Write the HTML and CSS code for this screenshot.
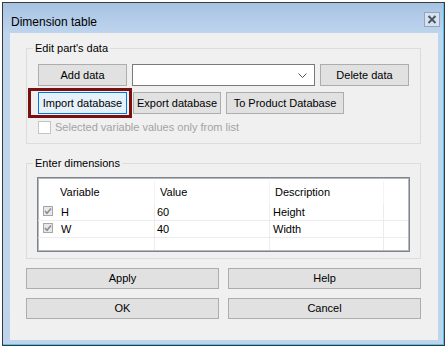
FILE: index.html
```html
<!DOCTYPE html>
<html>
<head>
<meta charset="utf-8">
<link rel="stylesheet" href="styles.css">
</head>
<body>
<div class="window">
  <div class="titlebar">
    <span class="title">Dimension table</span>
    <span class="close">
      <svg width="14" height="13" viewBox="0 0 14 13"><path d="M3.5 3 L10.5 10 M10.5 3 L3.5 10" stroke="#4d5561" stroke-width="2" fill="none"/></svg>
    </span>
  </div>
  <div class="client">
    <div class="group g1">
      <span class="legend">Edit part's data</span>
      <div class="row r1">
        <div class="btn w89">Add data</div>
        <div class="combo">
          <svg class="chev" width="9" height="5" viewBox="0 0 9 5"><path d="M0.5 0.5 L4.5 4.5 L8.5 0.5" stroke="#555" stroke-width="1" fill="none"/></svg>
        </div>
        <div class="btn w89">Delete data</div>
      </div>
      <div class="row r2">
        <div class="btn w89 focus">Import database</div>
        <div class="btn w88">Export database</div>
        <div class="btn w118">To Product Database</div>
      </div>
      <div class="check disabled"><span class="box"></span><span>Selected variable values only from list</span></div>
      <div class="highlight"></div>
    </div>
    <div class="group g2">
      <span class="legend">Enter dimensions</span>
      <div class="table">
        <div class="tr head">
          <div class="td c1"><span class="pad"></span>Variable</div>
          <div class="td c2">Value</div>
          <div class="td c3">Description</div>
          <div class="td c4"></div>
        </div>
        <div class="tr">
          <div class="td c1"><span class="rcheck"><svg width="10" height="10" viewBox="0 0 10 10"><rect x="0.5" y="0.5" width="9" height="9" fill="#e8e8e8" stroke="#a6a6a6"/><path d="M2 5 L4 7.2 L8 2.6" stroke="#8c8c8c" stroke-width="1.6" fill="none"/></svg></span>H</div>
          <div class="td c2">60</div>
          <div class="td c3">Height</div>
          <div class="td c4"></div>
        </div>
        <div class="tr">
          <div class="td c1"><span class="rcheck"><svg width="10" height="10" viewBox="0 0 10 10"><rect x="0.5" y="0.5" width="9" height="9" fill="#e8e8e8" stroke="#a6a6a6"/><path d="M2 5 L4 7.2 L8 2.6" stroke="#8c8c8c" stroke-width="1.6" fill="none"/></svg></span>W</div>
          <div class="td c2">40</div>
          <div class="td c3">Width</div>
          <div class="td c4"></div>
        </div>
        <div class="tr last">
          <div class="td c1"></div>
          <div class="td c2"></div>
          <div class="td c3"></div>
          <div class="td c4"></div>
        </div>
      </div>
    </div>
    <div class="buttons">
      <div class="btn">Apply</div>
      <div class="btn">Help</div>
      <div class="btn">OK</div>
      <div class="btn">Cancel</div>
    </div>
  </div>
</div>
</body>
</html>
```

FILE: styles.css
```css
* { box-sizing: border-box; }
html, body { margin: 0; padding: 0; background: #ffffff; }
body {
  font-family: "Liberation Sans", Arial, sans-serif;
  font-size: 11px;
  color: #000;
}
.window {
  margin: 2px 0 0 2px;
  width: 443px;
  height: 344px;
  border: 1px solid #3a3a3a;
  background: linear-gradient(#a7c2e2, #bfd5ee 31px, #bdd4ec);
  box-shadow: inset -1px -1px 0 #4fc3f0;
  display: flex;
  flex-direction: column;
}
.titlebar {
  height: 30px;
  padding: 9px 4px 0 8px;
  display: flex;
  justify-content: space-between;
  align-items: flex-start;
}
.title {
  margin-top: 3px;
  font-size: 12px;
  line-height: 15px;
  color: #000;
}
.close {
  width: 16px;
  height: 15px;
  border: 1px solid #96a5b8;
  background: #d6e2f1;
  display: flex;
  align-items: center;
  justify-content: center;
}
.close svg { display: block; }
.client {
  margin: 0 6px 0 7px;
  height: 307px;
  background: #f0f0f0;
  padding: 15px 17px 0 16px;
}
.group {
  position: relative;
  border: 1px solid #dcdcdc;
}
.legend {
  position: absolute;
  top: -7px;
  left: 6px;
  padding: 0 2px;
  background: #f0f0f0;
  line-height: 13px;
}
.g1 { padding: 15px 10px 9px 11px; }
.row { display: flex; height: 22px; }
.r1 { gap: 5px; }
.r2 { margin-top: 6px; gap: 6px; }
.r2 .w118 { margin-left: -1px; }
.btn {
  height: 22px;
  background: #e1e1e1;
  border: 1px solid #adadad;
  display: flex;
  align-items: center;
  justify-content: center;
  white-space: nowrap;
  line-height: 13px;
}
.w89 { width: 89px; }
.w88 { width: 88px; }
.w118 { width: 118px; }
.btn.focus {
  border-color: #0078d7;
  background: #e5f1fb;
}
.combo {
  width: 183px;
  height: 22px;
  background: #fff;
  border: 1px solid #7a7a7a;
  display: flex;
  align-items: center;
  justify-content: flex-end;
  padding-right: 7px;
}
.chev { display: block; }
.check {
  margin-top: 7px;
  display: flex;
  align-items: center;
  gap: 4px;
  height: 13px;
  line-height: 13px;
}
.check .box {
  width: 13px;
  height: 13px;
  border: 1px solid #c4c4c4;
  background: #fff;
}
.check.disabled { color: #a3a3a3; }
.highlight {
  position: absolute;
  left: 1px;
  top: 39px;
  width: 104px;
  height: 30px;
  border: 3px solid #7a0f10;
}
.g2 {
  margin-top: 19px;
  padding: 13px 10px 6px 10px;
}
.table {
  height: 75px;
  background: #fff;
  border: 1px solid #7f848c;
  box-shadow: inset 0 0 0 1px #b5b8bd;
  padding: 1px 1px 1px 0;
  display: flex;
  flex-direction: column;
  overflow: hidden;
}
.tr { display: flex; height: 17px; border-bottom: 1px solid #ececec; }
.tr.head { height: 25px; border-bottom: none; padding-top: 2px; }
.tr.last { flex: 1; border-bottom: none; }
.td {
  display: flex;
  align-items: center;
  border-right: 1px solid #ececec;
  white-space: nowrap;
  line-height: 13px;
}
.head .td { border-right-color: #f4f4f4; }
.c1 { width: 117px; padding-left: 22px; }
.c2 { width: 115px; padding-left: 2px; }
.c3 { width: 114px; padding-left: 3px; }
.c4 { flex: 1; border-right: none; }
.head .c2 { padding-left: 5px; }
.head .c3 { padding-left: 5px; }
.pad { display: none; }
.tr:not(.head) .c1 { padding-left: 5px; }
.rcheck { width: 18px; display: flex; align-items: center; margin-top: -3px; }
.rcheck svg { display: block; }
.buttons {
  margin-top: 9px;
  display: grid;
  grid-template-columns: 193px 193px;
  column-gap: 9px;
  row-gap: 9px;
}
.buttons .btn { height: 21px; }
```
